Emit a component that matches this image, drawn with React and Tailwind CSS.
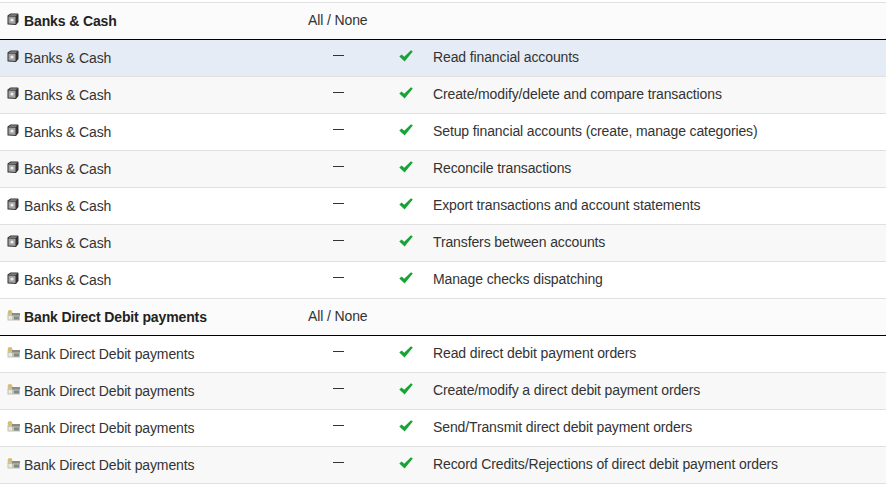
const A = "Banks & Cash";
const B = "Bank Direct Debit payments";

function Safe() {
  return (
    <svg width="12" height="13" viewBox="0 0 12 13" className="shrink-0">
      <path d="M0.5 2.5 L3.5 0.5 L10.5 0.5 Q11.5 0.5 11.5 1.5 L11.5 9 L9 12 L1 11.5 Q0.5 11.5 0.5 11 Z" fill="#333333" />
      <path d="M1.5 3.5 L8.5 3.8 L8.5 11 L1.5 10.5 Z" fill="#a2a2a2" />
      <circle cx="5" cy="7" r="1.6" fill="#ececec" />
      <path d="M1.5 2.8 L4 1.2 L10.5 1.2 L8.5 3.2 Z" fill="#7a7a7a" />
    </svg>
  );
}

function Bank() {
  return (
    <svg width="13" height="11" viewBox="0 0 13 11" className="shrink-0">
      <circle cx="3" cy="2.5" r="2.4" fill="#d4bf70" />
      <rect x="0.5" y="4" width="12.5" height="6.5" fill="#c2c2b4" />
      <rect x="5" y="3" width="8" height="2.5" fill="#8b8b80" />
      <rect x="1.5" y="6" width="3.5" height="3.5" fill="#ece9d2" />
      <rect x="7" y="6.5" width="5" height="3" fill="#7d8a8c" />
    </svg>
  );
}

function Check() {
  return (
    <svg width="14" height="12" viewBox="0 0 14 12">
      <path d="M0.3 6.4 L2.6 4.6 L5.2 6.8 L12 0.2 L13.8 1.4 L5.6 11.6 Z" fill="#17a336" />
    </svg>
  );
}

function Head({ icon, label }) {
  return (
    <div className="flex h-[37px] items-center border-b border-black bg-[#fbfbfb]">
      <div className="flex w-[308px] items-center pl-[7px] pt-[1px] font-bold text-[#222]">
        <span className="mr-[4px] -mt-[4px] flex w-[13px] justify-start">{icon}</span>
        <span>{label}</span>
      </div>
      <div className="-mt-[2px] text-[#333]">All / None</div>
    </div>
  );
}

function Row({ icon, label, text, bg }) {
  return (
    <div className={`flex h-[37px] items-center border-b border-[#e0e0e0] ${bg}`}>
      <div className="flex w-[333px] items-center pl-[7px]">
        <span className="mr-[4px] -mt-[4px] flex w-[13px] justify-start">{icon}</span>
        <span>{label}</span>
      </div>
      <div className="w-[66px] -mt-[4px]">
        <div className="mb-[2px] h-px w-[11px] bg-[#333]" />
      </div>
      <div className="flex w-[34px] -mt-[4px]">
        <Check />
      </div>
      <div className="-mt-[1px]">{text}</div>
    </div>
  );
}

const first = [
  "Read financial accounts",
  "Create/modify/delete and compare transactions",
  "Setup financial accounts (create, manage categories)",
  "Reconcile transactions",
  "Export transactions and account statements",
  "Transfers between accounts",
  "Manage checks dispatching",
];
const second = [
  "Read direct debit payment orders",
  "Create/modify a direct debit payment orders",
  "Send/Transmit direct debit payment orders",
  "Record Credits/Rejections of direct debit payment orders",
];

export default function App() {
  const bgFor = (i) => (i % 2 === 0 ? "bg-white" : "bg-[#f8f8f8]");
  return (
    <div className="h-[490px] w-[886px] overflow-hidden bg-white pt-[2px] font-['Liberation_Sans',Arial,sans-serif] text-[14px] tracking-[-0.12px] text-[#333]">
      <div className="border-t border-[#e0e0e0]">
        <Head icon={<Safe />} label={A} />
        {first.map((t, i) => (
          <Row key={t} icon={<Safe />} label={A} text={t} bg={i === 0 ? "bg-[#e5ecf5]" : bgFor(i)} />
        ))}
        <Head icon={<Bank />} label={B} />
        {second.map((t, i) => (
          <Row key={t} icon={<Bank />} label={B} text={t} bg={bgFor(i)} />
        ))}
      </div>
    </div>
  );
}
